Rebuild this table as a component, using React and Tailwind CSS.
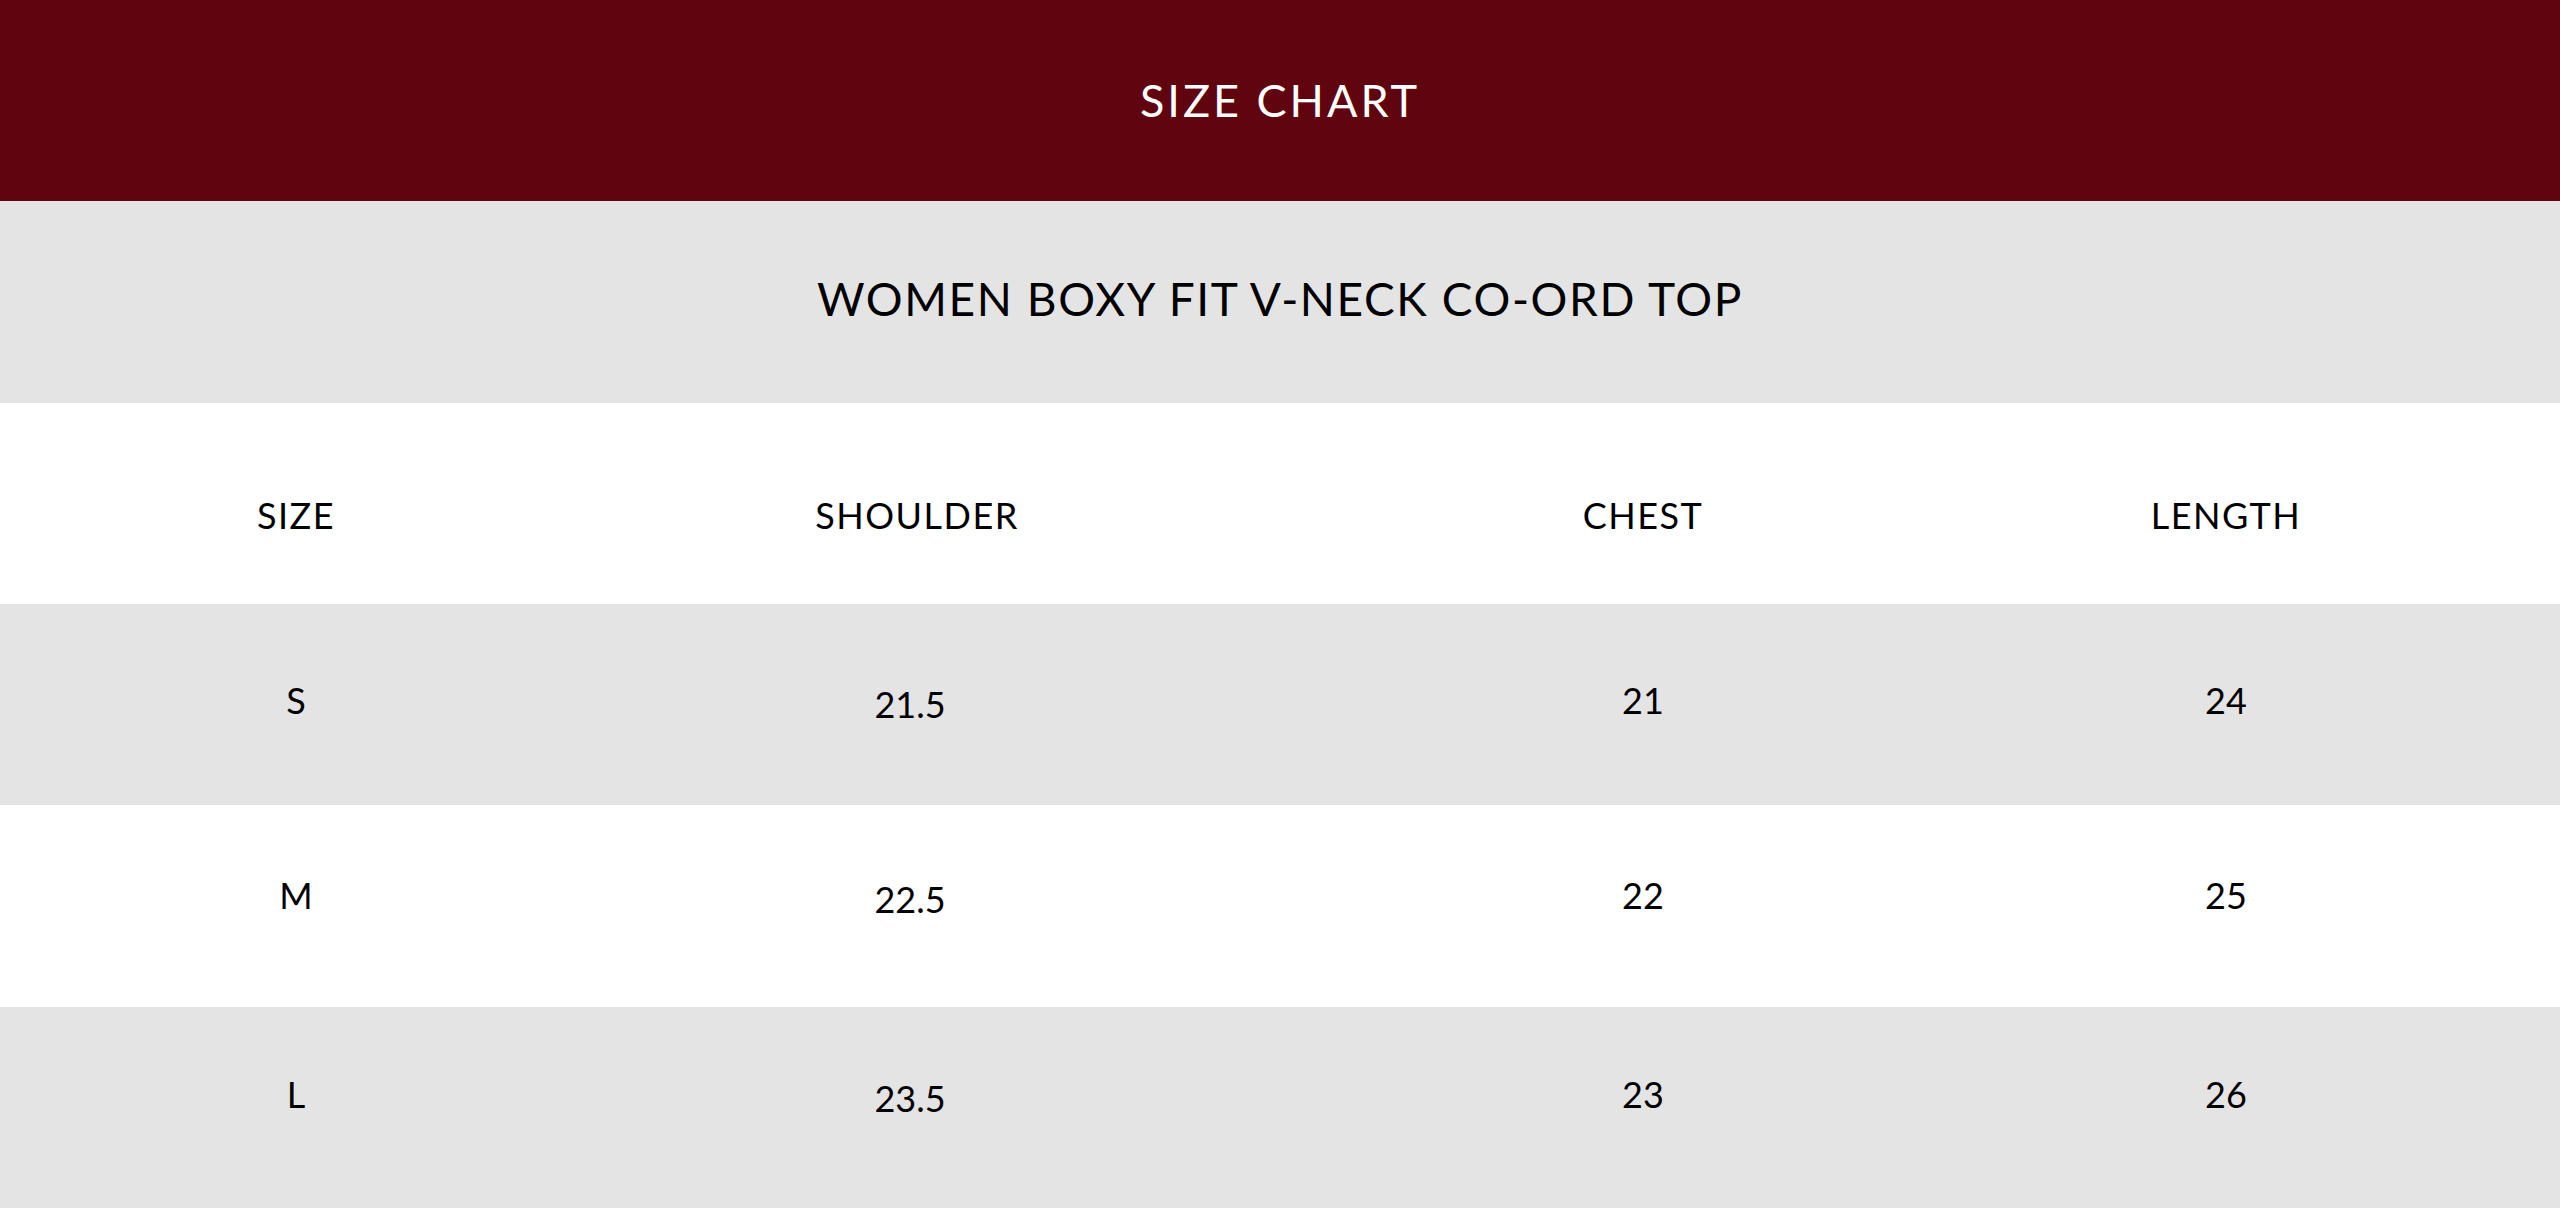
import React from "react";

const rows = [
  { size: "S", shoulder: "21.5", chest: "21", length: "24", bg: "bg-[#e4e4e4]", pad: "pb-[10px]" },
  { size: "M", shoulder: "22.5", chest: "22", length: "25", bg: "bg-white", pad: "pb-[22px]" },
  { size: "L", shoulder: "23.5", chest: "23", length: "26", bg: "bg-[#e4e4e4]", pad: "pb-[26px]" },
];

const cols = "grid grid-cols-[592px_636px_830px_336px] items-center";

const Row = ({ cells, bg, pad, second }) => (
  <div className={`${cols} ${bg} ${pad} h-full`}>
    <div className="text-center">{cells[0]}</div>
    <div className={`text-center ${second}`}>{cells[1]}</div>
    <div className="text-center">{cells[2]}</div>
    <div className="text-center">{cells[3]}</div>
  </div>
);

export default function App() {
  return (
    <div className="grid grid-rows-6 h-[1208px] w-full text-black font-['Lato','Open_Sans',sans-serif]">
      <div className="bg-[#600410] flex items-center justify-center">
        <h1 className="text-white text-[45px] tracking-[3px] font-normal leading-none">SIZE CHART</h1>
      </div>
      <div className="bg-[#e4e4e4] flex items-center justify-center pb-[6px]">
        <h2 className="text-[46px] tracking-[1.6px] font-normal leading-none">WOMEN BOXY FIT V-NECK CO-ORD TOP</h2>
      </div>
      <div className="text-[36px] tracking-[1.5px] leading-none h-full">
        <Row cells={["SIZE", "SHOULDER", "CHEST", "LENGTH"]} bg="bg-white" pad="pt-[24px]" second="pl-[14px]" />
      </div>
      {rows.map((r) => (
        <div key={r.size} className="text-[36px] tracking-[0px] leading-none h-full">
          <Row cells={[r.size, r.shoulder, r.chest, r.length]} bg={r.bg} pad={r.pad} second="pt-[8px]" />
        </div>
      ))}
    </div>
  );
}
